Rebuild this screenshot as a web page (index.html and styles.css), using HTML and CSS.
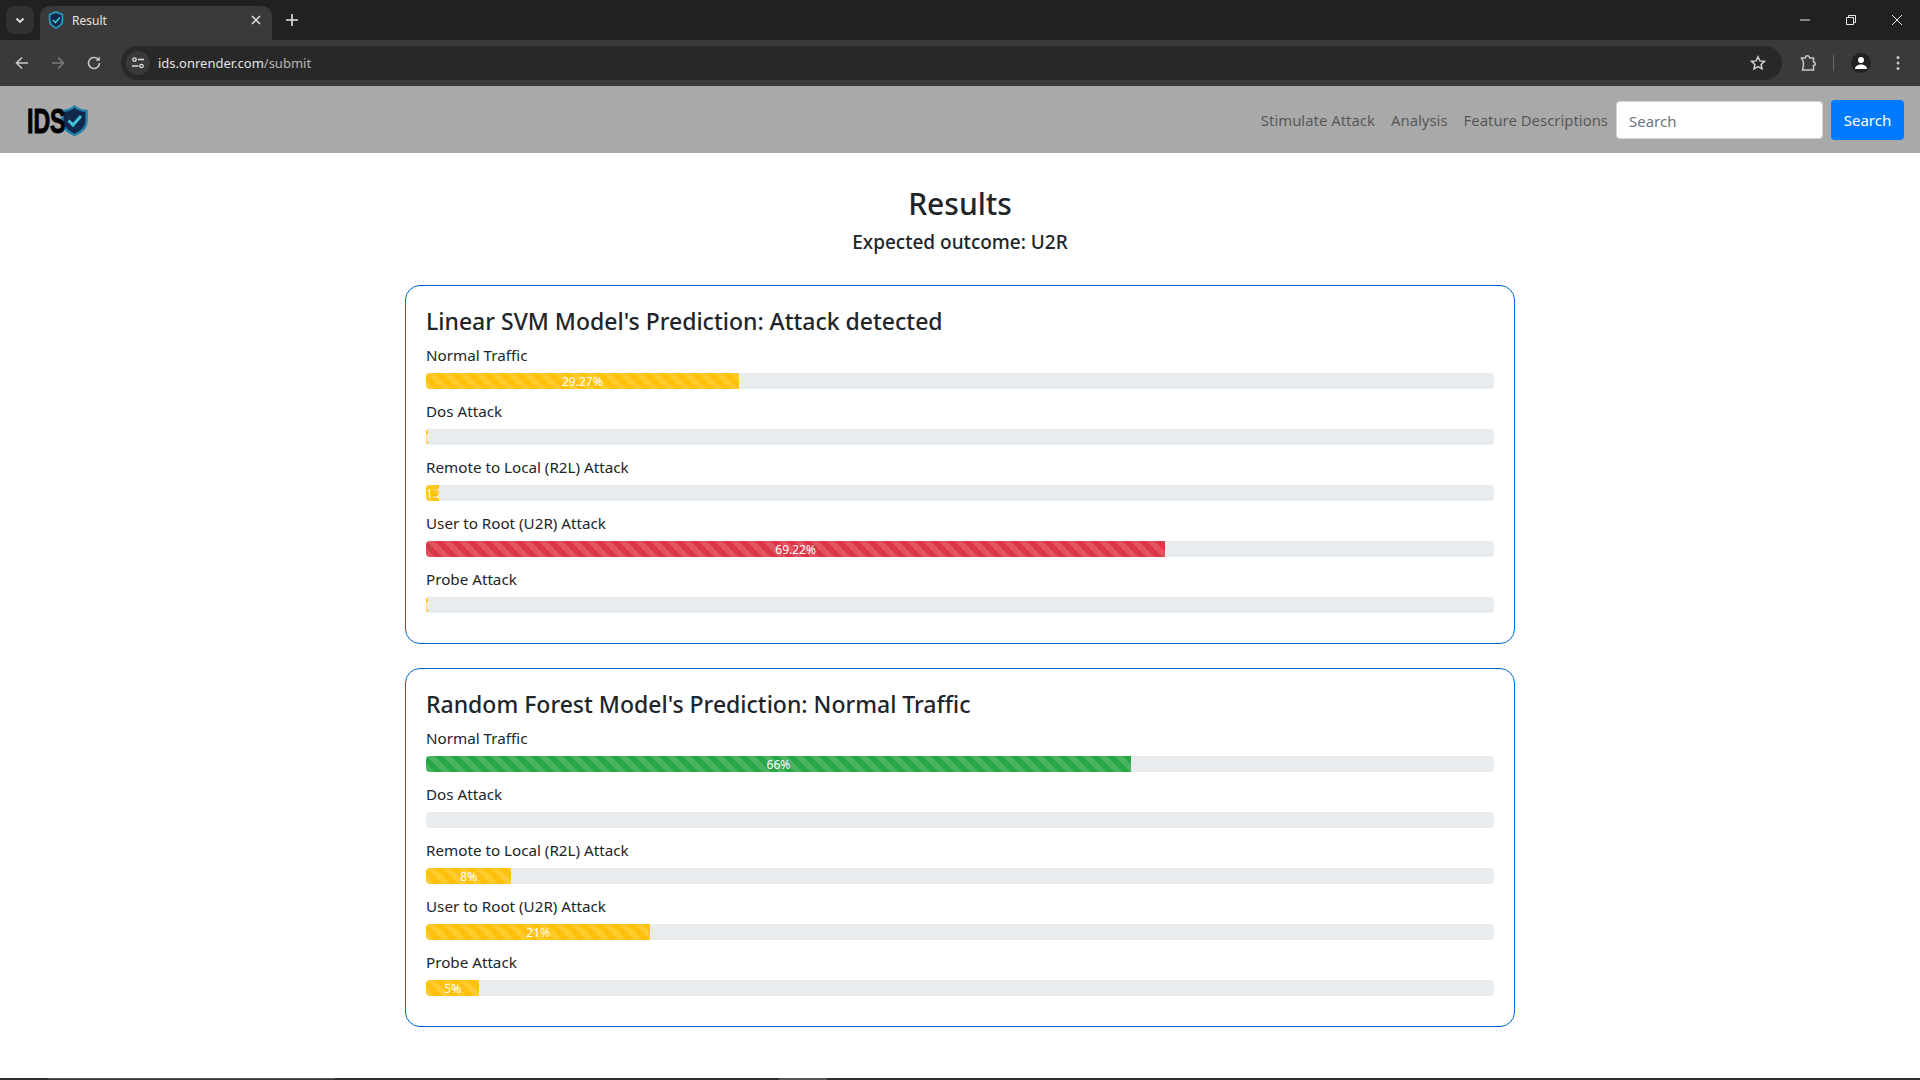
FILE: index.html
```html
<!DOCTYPE html>
<html lang="en">
  <head>
    <meta charset="UTF-8" />
    <title>Result</title>
    <link rel="stylesheet" href="styles.css">
  </head>
  <body>
    <div class="tabstrip">
      <div class="tab-search">
        <svg width="12" height="12" viewBox="0 0 12 12"><path d="M2.5 4.5 6 8l3.5-3.5" fill="none" stroke="#e3e3e3" stroke-width="1.8"/></svg>
      </div>
      <div class="tab">
        <svg class="tab-icon" width="16" height="18" viewBox="0 0 24 28"><path d="M12 1.5 22 5.5v9c0 5.500-4 9.500-10 12-6-2.500-10-6.500-10-12v-9z" fill="#12294d" stroke="#2a9fc9" stroke-width="2.500"/><path d="M7 14l4 4 7-8" fill="none" stroke="#3fc1d6" stroke-width="2.500"/></svg>
        <span class="tab-title">Result</span>
        <svg class="tab-close" width="10" height="10" viewBox="0 0 10 10"><path d="M1 1l8 8M9 1l-8 8" stroke="#e3e3e3" stroke-width="1.500"/></svg>
      </div>
      <svg class="tab-new" width="14" height="14" viewBox="0 0 14 14"><path d="M7 1v12M1 7h12" stroke="#e3e3e3" stroke-width="1.600"/></svg>
      <div class="win-controls">
        <svg width="12" height="12" viewBox="0 0 12 12"><path d="M1 6h10" stroke="#e8e8e8" stroke-width="1"/></svg>
        <svg width="12" height="12" viewBox="0 0 12 12"><path d="M1.500 3.500h7v7h-7zM3.500 3.500v-2h7v7h-2" fill="none" stroke="#e8e8e8" stroke-width="1"/></svg>
        <svg width="12" height="12" viewBox="0 0 12 12"><path d="M1 1l10 10M11 1 1 11" stroke="#e8e8e8" stroke-width="1"/></svg>
      </div>
    </div>

    <div class="toolbar">
      <svg class="tool-btn" width="16" height="16" viewBox="0 0 16 16"><path d="M14 8H2.500M8 2.500 2.500 8 8 13.500" fill="none" stroke="#c7c7c7" stroke-width="1.600"/></svg>
      <svg class="tool-btn" width="16" height="16" viewBox="0 0 16 16"><path d="M2 8h11.500M8 2.500 13.500 8 8 13.500" fill="none" stroke="#7c7c7c" stroke-width="1.600"/></svg>
      <svg class="tool-btn" width="16" height="16" viewBox="0 0 16 16"><path d="M13.500 8A5.500 5.500 0 1 1 11.800 4" fill="none" stroke="#c7c7c7" stroke-width="1.600"/><path d="M13.800 1.500v4.300H9.500z" fill="#c7c7c7"/></svg>
      <div class="omnibox">
        <div class="site-info">
          <svg width="14" height="12" viewBox="0 0 14 12"><circle cx="3.500" cy="2.500" r="1.700" fill="none" stroke="#dcdcdc" stroke-width="1.300"/><path d="M7 2.500h6M1 9h6.500" stroke="#dcdcdc" stroke-width="1.500"/><circle cx="10.500" cy="9" r="1.700" fill="none" stroke="#dcdcdc" stroke-width="1.300"/></svg>
        </div>
        <span class="url">ids.onrender.com<span class="url-path">/submit</span></span>
        <svg class="star" width="16" height="16" viewBox="0 0 16 16"><path d="M8 1.800l1.900 4.100 4.500.5-3.300 3 .9 4.400L8 11.600l-4 2.200.9-4.400-3.300-3 4.500-.5z" fill="none" stroke="#d0d0d0" stroke-width="1.500"/></svg>
      </div>
      <svg class="ext" width="16" height="18" viewBox="0 0 16 18"><path d="M1.500 4h3.800a2.200 2.200 0 0 1 4.400 0h3.800v4a1.800 1.800 0 0 1 0 3.600v4.400H2.500l.9-4V8z" fill="none" stroke="#c7c7c7" stroke-width="1.500"/></svg>
      <div class="tool-sep"></div>
      <div class="profile">
        <svg width="14" height="14" viewBox="0 0 14 14"><circle cx="7" cy="4" r="3" fill="#fff"/><path d="M1 13c0-3 3-4.500 6-4.500s6 1.500 6 4.500z" fill="#fff"/></svg>
      </div>
      <svg class="kebab" width="4" height="16" viewBox="0 0 4 16"><circle cx="2" cy="2.500" r="1.500" fill="#c7c7c7"/><circle cx="2" cy="8" r="1.500" fill="#c7c7c7"/><circle cx="2" cy="13.500" r="1.500" fill="#c7c7c7"/></svg>
    </div>

    <nav class="navbar">
      <a class="brand" href="#">
        <span class="brand-text">IDS</span>
        <svg width="27" height="31" viewBox="0 0 27 31"><path d="M13.500 1.500C16 4 20 5.500 25.500 6v10c0 6.500-5 11-12 14-7-3-12-7.500-12-14V6C7 5.500 11 4 13.500 1.500z" fill="#12294d" stroke="#1f7fa8" stroke-width="2.400"/><path d="M7.500 15.500l4.500 4.500 8-9" fill="none" stroke="#3fc1d6" stroke-width="3"/></svg>
      </a>
      <div class="nav-links">
        <a href="#">Stimulate Attack</a>
        <a href="#">Analysis</a>
        <a href="#">Feature Descriptions</a>
      </div>
      <form class="nav-search">
        <input type="text" placeholder="Search" />
        <button type="button">Search</button>
      </form>
    </nav>

    <main class="content">
      <h2 class="page-title">Results</h2>
      <h5 class="outcome">Expected outcome: U2R</h5>

      <section class="card">
        <h3>Linear SVM Model's Prediction: Attack detected</h3>
        <label>Normal Traffic</label>
        <div class="progress"><div class="bar bar-warning" style="width: 29.27%">29.27%</div></div>
        <label>Dos Attack</label>
        <div class="progress"><div class="bar bar-warning" style="width: 0.2%">0.24%</div></div>
        <label>Remote to Local (R2L) Attack</label>
        <div class="progress"><div class="bar bar-warning" style="width: 1.25%">1.25%</div></div>
        <label>User to Root (U2R) Attack</label>
        <div class="progress"><div class="bar bar-danger" style="width: 69.22%">69.22%</div></div>
        <label>Probe Attack</label>
        <div class="progress"><div class="bar bar-warning" style="width: 0.2%">0.02%</div></div>
      </section>

      <section class="card">
        <h3>Random Forest Model's Prediction: Normal Traffic</h3>
        <label>Normal Traffic</label>
        <div class="progress"><div class="bar bar-success" style="width: 66%">66%</div></div>
        <label>Dos Attack</label>
        <div class="progress"><div class="bar bar-warning" style="width: 0%">0%</div></div>
        <label>Remote to Local (R2L) Attack</label>
        <div class="progress"><div class="bar bar-warning" style="width: 8%">8%</div></div>
        <label>User to Root (U2R) Attack</label>
        <div class="progress"><div class="bar bar-warning" style="width: 21%">21%</div></div>
        <label>Probe Attack</label>
        <div class="progress"><div class="bar bar-warning" style="width: 5%">5%</div></div>
      </section>
    </main>

    <div class="taskbar-edge">
      <div class="edge-active"></div>
      <div class="edge-other"></div>
    </div>
  </body>
</html>
```

FILE: styles.css
```css
* {
  box-sizing: border-box;
}

body {
  margin: 0;
  height: 100vh;
  overflow: hidden;
  display: flex;
  flex-direction: column;
  background: white;
  color: #212529;
  font-family: "Noto Sans", "Open Sans", sans-serif;
  font-size: 15px;
}

a {
  text-decoration: none;
}

/* browser chrome */
.tabstrip {
  height: 40px;
  flex: none;
  display: flex;
  align-items: flex-end;
  background: #202222;
  color: #e3e3e3;
}

.tab-search {
  width: 28px;
  height: 28px;
  margin: 0 6px 6px 6px;
  display: flex;
  align-items: center;
  justify-content: center;
  background: #303231;
  border-radius: 8px;
}

.tab {
  width: 232px;
  height: 34px;
  padding: 0 11px 6px 8px;
  display: flex;
  align-items: center;
  background: #3a3a3a;
  border-radius: 10px 10px 0 0;
}

.tab-title {
  flex: 1;
  margin-left: 8px;
  font-size: 12px;
}

.tab-new {
  margin: 0 0 13px 13px;
}

.win-controls {
  margin-left: auto;
  height: 40px;
  padding-right: 17px;
  display: flex;
  align-items: center;
  gap: 34px;
}

.toolbar {
  height: 46px;
  flex: none;
  padding-left: 14px;
  display: flex;
  align-items: center;
  background: #3a3a3a;
}

.tool-btn {
  flex: none;
  margin-right: 20px;
}

.omnibox {
  flex: none;
  width: 1661px;
  height: 34px;
  margin-left: -1px;
  padding: 0 16px 0 5px;
  display: flex;
  align-items: center;
  background: #282828;
  border-radius: 17px;
}

.site-info {
  width: 24px;
  height: 24px;
  display: flex;
  align-items: center;
  justify-content: center;
  background: #3a3a3a;
  border-radius: 50%;
}

.url {
  margin-left: 8px;
  font-size: 13px;
  color: #e3e3e3;
}

.url-path {
  color: #b5b5b5;
}

.star {
  margin-left: auto;
}

.ext {
  flex: none;
  margin-left: 18px;
}

.tool-sep {
  flex: none;
  width: 1px;
  height: 16px;
  margin: 0 17px 0 17px;
  background: #6a6a6a;
}

.profile {
  flex: none;
  width: 20px;
  height: 20px;
  display: flex;
  align-items: center;
  justify-content: center;
  background: #202222;
  border-radius: 50%;
}

.kebab {
  flex: none;
  margin-left: 25px;
}

/* site navbar */
.navbar {
  height: 67px;
  flex: none;
  padding: 0 16px 0 27px;
  display: flex;
  align-items: center;
  background: darkgray;
}

.brand {
  display: flex;
  align-items: center;
  padding-top: 2px;
  color: black;
}

.brand-text {
  width: 34px;
  font-family: "Liberation Sans", sans-serif;
  font-size: 35px;
  font-weight: bold;
  line-height: 1;
  -webkit-text-stroke: 1px black;
  transform: scaleX(0.66);
  transform-origin: left center;
}

.nav-links {
  margin-left: auto;
  display: flex;
  font-size: 14.9px;
}

.nav-links a {
  padding: 0 8px;
  color: rgba(0, 0, 0, 0.5);
}

.nav-search {
  display: flex;
  align-items: center;
  margin: 0;
}

.nav-search input {
  width: 207px;
  height: 38px;
  padding: 8px 12px 6px;
  border: 1px solid #ced4da;
  border-radius: 4px;
  font: inherit;
}

.nav-search input::placeholder {
  color: #6c757d;
}

.nav-search button {
  width: 73px;
  height: 40px;
  margin-left: 8px;
  padding: 0;
  border: none;
  border-radius: 4px;
  background: #007bff;
  color: white;
  font: inherit;
}

/* results */
.content {
  flex: 1;
  width: 1110px;
  margin: 0 auto;
  padding-top: 29px;
}

.page-title {
  margin: 0;
  font-size: 30px;
  font-weight: 500;
  line-height: 44px;
  text-align: center;
}

.outcome {
  margin: 2px 0 29px;
  font-size: 19px;
  font-weight: 500;
  line-height: 28px;
  text-align: center;
}

.card {
  height: 359px;
  margin-bottom: 24px;
  padding: 20px;
  border: 1.5px solid #0066cc;
  border-radius: 15px;
}

.card h3 {
  margin: 0 0 5px;
  font-size: 23px;
  font-weight: 500;
  line-height: 30px;
}

.card label {
  display: block;
  height: 24px;
  margin-bottom: 8px;
  font-size: 15.2px;
  line-height: 28px;
}

.progress {
  height: 16px;
  margin-bottom: 8px;
  display: flex;
  overflow: hidden;
  background: #e9ecef;
  border-radius: 4px;
}

.bar {
  display: flex;
  flex-direction: column;
  justify-content: center;
  overflow: hidden;
  color: white;
  font-size: 12px;
  text-align: center;
  white-space: nowrap;
  background-image: linear-gradient(
    45deg,
    rgba(255, 255, 255, 0.15) 25%,
    transparent 25%,
    transparent 50%,
    rgba(255, 255, 255, 0.15) 50%,
    rgba(255, 255, 255, 0.15) 75%,
    transparent 75%,
    transparent
  );
  background-size: 16px 16px;
}

.bar-warning {
  background-color: #ffc107;
}

.bar-danger {
  background-color: #dc3545;
}

.bar-success {
  background-color: #28a745;
}

.taskbar-edge {
  height: 2px;
  flex: none;
  display: flex;
  background: #2e2e2e;
}

.edge-active {
  width: 287px;
  margin-left: 48px;
  background: #333;
  border-top: 1px solid #5a5a5a;
}

.edge-other {
  width: 48px;
  margin-left: 444px;
  background: #555;
}
```
